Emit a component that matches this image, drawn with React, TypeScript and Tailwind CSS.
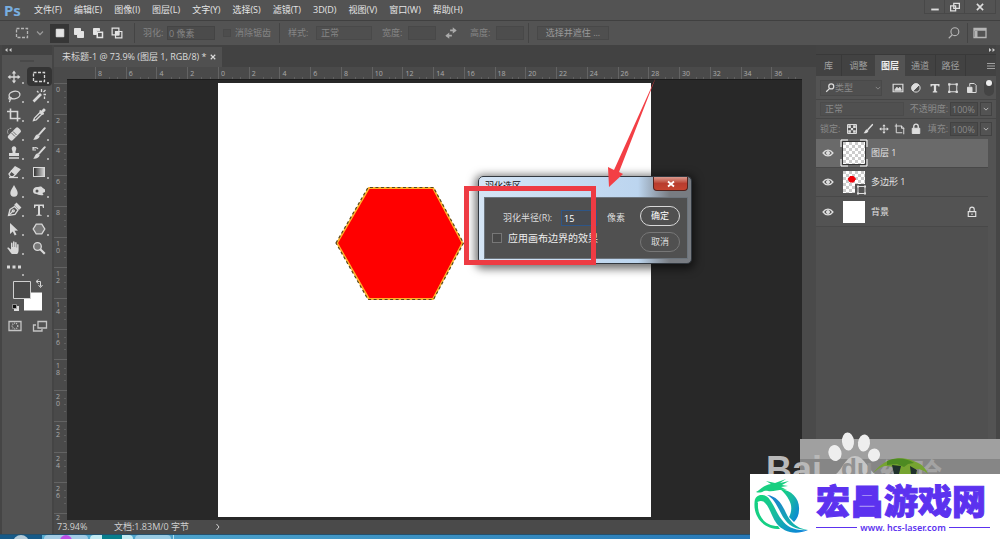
import type { ReactNode } from "react";

const menus = ["文件(F)", "编辑(E)", "图像(I)", "图层(L)", "文字(Y)", "选择(S)", "滤镜(T)", "3D(D)", "视图(V)", "窗口(W)", "帮助(H)"];

const rulerX = [8, 6, 4, 2, 0, 2, 4, 6, 8, 10, 12, 14, 16, 18, 20, 22, 24, 26, 28, 30, 32, 34, 36];
const rulerY = ["0", "2", "4", "6", "8", "10", "12", "14", "16", "18", "20", "22", "24", "26"];

function Icon({ children, className = "size-4" }: { children: ReactNode; className?: string }) {
  return (
    <svg viewBox="0 0 16 16" className={className} fill="none" stroke="currentColor" strokeWidth="1.3" aria-hidden="true">
      {children}
    </svg>
  );
}

const moveIcon = (
  <Icon>
    <path d="M8 3v10M3 8h10" />
    <path d="M8 1.600 10.200 4.400H5.800zM8 14.400 5.800 11.600h4.400zM1.600 8l2.800-2.200v4.400zM14.400 8l-2.800 2.200V5.800z" fill="currentColor" stroke="none" />
  </Icon>
);

const brushPath = (
  <>
    <path d="M13.800 2.200 8 8.600" strokeWidth="2" strokeLinecap="round" />
    <path d="M6.500 8.300 8.700 10.300C8 13 5 14 2 13.600 4 12.600 3.800 9 6.500 8.300z" fill="currentColor" stroke="none" />
  </>
);

const tools: { name: string; icon: ReactNode; corner?: boolean }[] = [
  { name: "移动", icon: moveIcon },
  { name: "矩形选框", icon: <Icon><rect x="2.500" y="3.500" width="11" height="9" strokeDasharray="3 1.500" /></Icon> },
  {
    name: "套索",
    icon: (
      <Icon>
        <ellipse cx="8.500" cy="7" rx="5.500" ry="3.800" transform="rotate(-12 8.500 7)" />
        <path d="M4 9c-1.500.5-1.500 2.300 0 2.300s1.500-1.800.3-2.200M4 11.300c.4 1.200 0 2-.8 2.700" />
      </Icon>
    ),
  },
  {
    name: "魔棒",
    icon: (
      <Icon>
        <path d="m2.500 13.500 7.500-7.500" strokeWidth="2.600" />
        <path d="M10.500 1v3M13.500 8.500V11M6 3l1.500 1.500M14.500 2l-2 2M12.500 6.500H15" />
      </Icon>
    ),
  },
  { name: "裁剪", icon: <Icon><path d="M4.500 1.500v10h10M1 4.500h10.500v10" strokeWidth="1.600" /></Icon> },
  {
    name: "吸管",
    icon: (
      <Icon>
        <path d="m9 4.500 3 3M2.500 13.500l1-2.500 5.500-5.500 1.800 1.800-5.600 5.500z" />
        <path d="m8 4 1.500-1 1 .8 1.600-2c1.500-.8 3 .7 2.200 2.200l-2 1.600.8 1-1 1.500z" fill="currentColor" stroke="none" />
      </Icon>
    ),
  },
  {
    name: "修复画笔",
    icon: (
      <Icon>
        <rect x="1" y="5" width="14.500" height="6.500" rx="2" transform="rotate(-45 8 8)" fill="currentColor" stroke="none" />
        <path d="m5.500 7 3.500 3.500M7 5.500l3.500 3.500" stroke="#535353" strokeWidth=".8" />
        <path d="M2 7.500c-1.500-3 1-6 4-5" strokeDasharray="1 1" strokeWidth="1" />
      </Icon>
    ),
  },
  { name: "画笔", icon: <Icon>{brushPath}</Icon> },
  {
    name: "仿制图章",
    icon: (
      <Icon>
        <path d="M5.800 4.200a2.300 2.300 0 1 1 4.400 0C10 5.500 9.200 6 9.500 8H13v3H3V8h3.500c.3-2-.5-2.500-.7-3.800zM3 12.300h10v1.500H3z" fill="currentColor" stroke="none" />
      </Icon>
    ),
  },
  {
    name: "历史记录画笔",
    icon: (
      <Icon>
        {brushPath}
        <path d="M2 3.500c2-1.500 4-1 5 .5M2 2v3h3" strokeWidth="1.100" />
      </Icon>
    ),
  },
  {
    name: "橡皮擦",
    icon: (
      <Icon>
        <path d="m3 10 2.500-3 4 3.300-2.300 2.400H4.500z" />
        <path d="m5.500 7 3.600-4.200 4.700 2.700-4.300 4.800z" fill="currentColor" />
        <path d="M3 13.500h9" />
      </Icon>
    ),
  },
  {
    name: "渐变",
    icon: (
      <Icon>
        <defs>
          <linearGradient id="toolGradient"><stop stopColor="#2b2b2b" /><stop offset="1" stopColor="#d8d8d8" /></linearGradient>
        </defs>
        <rect x="2.500" y="3.500" width="11" height="9" fill="url(#toolGradient)" strokeWidth="1" />
      </Icon>
    ),
  },
  { name: "模糊", icon: <Icon><path d="M8 2c1.200 3 3.700 5 3.700 8a3.700 3.700 0 0 1-7.400 0C4.300 7 6.800 5 8 2z" fill="currentColor" stroke="none" /></Icon> },
  {
    name: "减淡",
    icon: (
      <Icon>
        <path d="M2 8c0-3 2.500-4.500 5-4 2-1 4-.5 4.500.8L14 6.500V9l-2.500 1 1 2c-4 1-6-1-7-1C3.300 11 2 9.800 2 8z" fill="currentColor" stroke="none" />
        <circle cx="6" cy="8" r="1.500" fill="#535353" stroke="none" />
      </Icon>
    ),
  },
  {
    name: "钢笔",
    icon: (
      <Icon>
        <path d="M2.500 13.500 4 7.500l4.500-3 3.500 3.500-3 4.300z" />
        <path d="m9 3 1.500-1.500 4 4L13 7z" fill="currentColor" />
        <path d="m2.500 13.500 4-4" /><circle cx="7.300" cy="8.800" r="1" />
      </Icon>
    ),
  },
  { name: "横排文字", icon: <Icon><path d="M3 2.500h10V6h-1l-.7-2H9v8.500l1.700.4v.9H5.300v-.9l1.700-.4V4H4.700L4 6H3z" fill="currentColor" stroke="none" /></Icon> },
  { name: "路径选择", icon: <Icon><path d="m4 2 8 7.500-3.500.3 2 3.800-1.800.9-1.900-4L4 13z" fill="currentColor" stroke="none" /></Icon> },
  { name: "多边形", icon: <Icon><path d="M5.200 3.200h5.600L13.800 8l-3 4.800H5.200L2.200 8z" fill="#777" /></Icon> },
  {
    name: "抓手",
    icon: (
      <Icon>
        <path d="M5.800 14C4 12 3 10 1.600 8.700c-.7-1 .7-1.500 1.500-.8L5 9.500V3.400c0-1.200 1.500-1.200 1.500 0V7h.5V2.200c0-1.200 1.600-1.200 1.600 0V7h.5V3c0-1.200 1.500-1.200 1.500 0v4.500h.5V5c0-1.200 1.500-1.200 1.500 0v5c0 2-.6 3-1.400 4z" fill="currentColor" stroke="none" />
      </Icon>
    ),
  },
  { name: "缩放", icon: <Icon><circle cx="6.500" cy="6.500" r="3.800" fill="#777" /><path d="m9.300 9.300 4.500 4.500" strokeWidth="2.200" /></Icon>, corner: false },
];

function Chevron({ className = "size-2" }: { className?: string }) {
  return <Icon className={className}><path d="m2 5 6 6 6-6" strokeWidth="2.500" /></Icon>;
}

function Divider() {
  return <div className="h-5 w-px shrink-0 bg-[#444]" />;
}

function OptionsBar() {
  return (
    <div className="flex h-[25px] shrink-0 items-center border-t border-[#404040] bg-[#535353] text-[#858585]">
      <button aria-label="矩形选框工具" className="ml-3.5 flex w-8 items-center gap-1.5 text-[#b5b5b5]">
        <Icon><rect x="2.500" y="3.500" width="11" height="9" strokeDasharray="3 1.500" /></Icon>
        <Chevron className="size-2 text-[#999]" />
      </button>
      <div className="ml-1 flex items-center text-[#e4e4e4]">
        <button aria-label="新选区" className="flex size-[19px] items-center justify-center bg-[#363636]">
          <Icon className="size-3"><path d="M3 3h10v10H3z" fill="currentColor" /></Icon>
        </button>
        <button aria-label="添加到选区" className="flex size-[19px] items-center justify-center">
          <Icon className="size-3"><path d="M2 2h8v4h4v8H6v-4H2z" fill="currentColor" /></Icon>
        </button>
        <button aria-label="从选区减去" className="flex size-[19px] items-center justify-center">
          <Icon className="size-3"><path d="M2 2h8v3H6v5H2z" fill="currentColor" /><path d="M7 7h7v7H7z" strokeWidth="2" /></Icon>
        </button>
        <button aria-label="与选区交叉" className="flex size-[19px] items-center justify-center">
          <Icon className="size-3"><path d="M1.500 1.500h9v9h-9zM6 6h8.500v8.500H6z" strokeWidth="1.600" /><path d="M6 6h4.500v4.500H6z" fill="currentColor" /></Icon>
        </button>
      </div>
      <div className="mr-2 ml-2"><Divider /></div>
      <label className="flex items-center gap-1">
        <span className="w-5">羽化:</span>
        <input defaultValue="0 像素" disabled className="h-3.5 w-12 border border-[#444] bg-[#4b4b4b] px-px" />
      </label>
      <label className="ml-2 flex items-center gap-1">
        <input type="checkbox" disabled className="size-2 appearance-none border border-[#494949] bg-[#4d4d4d]" />
        <span>消除锯齿</span>
      </label>
      <div className="mr-2 ml-2"><Divider /></div>
      <label className="flex items-center gap-1">
        <span className="w-6">样式:</span>
        <select disabled className="h-3.5 w-14 appearance-none border border-[#494949] bg-[#4f4f4f] px-1 opacity-100"><option>正常</option></select>
      </label>
      <label className="ml-2.5 flex items-center gap-1">
        <span className="w-[22px]">宽度:</span>
        <input disabled className="h-3.5 w-7 border border-[#484848] bg-[#4d4d4d]" />
      </label>
      <button aria-label="互换宽高" className="mx-2 text-[#aaa]">
        <Icon className="size-3.5"><path d="M7 5h6M3 11h6" strokeWidth="1.800" /><path d="m10 1.500 4.500 3.500L10 8.500zM6 7.500 1.500 11 6 14.500z" fill="currentColor" stroke="none" /></Icon>
      </button>
      <label className="ml-1 flex items-center gap-1">
        <span className="w-[22px]">高度:</span>
        <input disabled className="h-3.5 w-7 border border-[#484848] bg-[#4d4d4d]" />
      </label>
      <div className="mr-2 ml-1"><Divider /></div>
      <button className="h-3.5 w-[72px] border border-[#484848] bg-[#4f4f4f] leading-3 text-[#999]">选择并遮住 ...</button>
      <div className="mr-3 ml-auto flex items-center gap-1 text-[#b5b5b5]">
        <button aria-label="搜索" className="mr-0.5"><Icon className="size-3.5"><circle cx="9" cy="6.500" r="4.500" /><path d="m6 10-4 4" /></Icon></button>
        <Divider />
        <button aria-label="工作区">
          <Icon><path d="M2 3.500h12v9H2zM2 5h12" /><path d="M3 6h2.500v6H3z" fill="currentColor" stroke="none" /></Icon>
        </button>
      </div>
    </div>
  );
}

function ToolBox() {
  return (
    <aside className="flex w-[54px] shrink-0 flex-col border-x-2 border-[#454545] bg-[#535353] text-[#d8d8d8]">
      <div className="flex h-2.5 items-center bg-[#424242] pl-0.5 text-[#ccc]">
        <Icon className="size-2"><path d="M7 4 2 8l5 4zM15 4l-5 4 5 4z" fill="currentColor" stroke="none" /></Icon>
      </div>
      <div className="flex h-3 items-center justify-center"><div className="h-0.5 w-3.5 bg-[#494949]" /></div>
      <div className="grid auto-rows-[19px] grid-cols-2">
        {tools.map((tool, i) => (
          <button
            key={tool.name}
            aria-label={tool.name}
            className={i === 1 ? "flex items-end justify-center rounded-sm bg-[#343434]" : "flex items-end justify-center"}
          >
            <span className="self-center">{tool.icon}</span>
            <span className={tool.corner === false ? "w-0.5" : "mb-0.5 h-0.5 w-0.5 bg-[#aaa]"} />
          </button>
        ))}
        <button aria-label="编辑工具栏" className="flex items-end justify-center">
          <span className="self-center"><Icon><path d="M1 8h3M6.500 8h3M12 8h3" strokeWidth="3" /></Icon></span>
          <span className="h-0.5 w-0.5 bg-[#aaa]" />
        </button>
      </div>
      <button aria-label="前景色和背景色" className="mt-0.5 ml-2 w-[34px]">
        <svg viewBox="0 0 34 34" className="w-full" aria-hidden="true">
          <path d="M14 14.500h18v18H14z" fill="#fff" />
          <path d="M3.500 3.500h17v17h-17z" fill="#4a4a4a" stroke="#cfcfcf" />
          <path d="M26.500 3.500h4v5M28.500 1.500l-2.500 2 2.500 2M28.500 7l2 2.500 2-2.500" fill="none" stroke="#d8d8d8" />
          <path d="M4 28h5v5H4z" fill="#ddd" /><path d="M2.500 26.500h4v4h-4z" fill="#111" stroke="#aaa" strokeWidth=".8" />
        </svg>
      </button>
      <div className="mt-1.5 flex justify-around text-[#c4c4c4]">
        <button aria-label="快速蒙版"><Icon><path d="M2 3.500h12v9H2z" /><circle cx="8" cy="8" r="2.800" strokeDasharray="1 1" /></Icon></button>
        <button aria-label="屏幕模式"><Icon><path d="M6 3.500h8.500v6.500H6zM4 7H1.500v6H10v-2" /></Icon></button>
      </div>
    </aside>
  );
}

function Workspace() {
  return (
    <section className="flex min-w-0 flex-1 flex-col bg-[#424242]">
      <div className="flex h-[22px] shrink-0 items-end">
        <div className="flex h-5 items-center gap-1 bg-[#505050] pr-1.5 pl-2 text-[#dcdcdc]">
          <span>未标题-1 @ 73.9% (图层 1, RGB/8) *</span>
          <button aria-label="关闭文档"><Icon className="size-1.5"><path d="m2 2 12 12M14 2 2 14" strokeWidth="3" /></Icon></button>
        </div>
      </div>
      <div className="flex min-h-0 flex-1">
        <div className="flex w-[13px] shrink-0 flex-col bg-[#4a4a4a] pt-4 text-[7px] leading-[7px] text-[#aaa]">
          <div className="grid min-h-0 flex-1 auto-rows-fr">
            {rulerY.map((n, i) => (
              <div key={i} className="flex border-t border-[#636363] pt-0.5 pl-0.5">
                <div className="flex flex-col">
                  {n.split("").map((d, j) => <span key={j}>{d}</span>)}
                </div>
                <div className="mr-px mb-1 ml-auto flex w-0.5 flex-col justify-evenly">
                  <i className="h-px bg-[#606060]" /><i className="h-px bg-[#606060]" /><i className="h-px bg-[#606060]" />
                </div>
              </div>
            ))}
          </div>
          <div className="h-[7px] overflow-hidden border-t border-[#636363] pl-0.5">2</div>
        </div>
        <div className="flex min-w-0 flex-1 flex-col">
          <div className="grid h-3 shrink-0 auto-cols-fr grid-flow-col bg-[#4a4a4a] pl-7 text-[7px] leading-[11px] text-[#aaa]">
            {rulerX.map((n, i) => (
              <div key={i} className="flex items-end border-l border-[#636363] pl-0.5">
                <span>{n}</span>
                <div className="flex h-0.5 flex-1 justify-evenly">
                  <i className="w-px bg-[#606060]" /><i className="w-px bg-[#606060]" />
                </div>
              </div>
            ))}
          </div>
          <div className="min-h-0 flex-1 border-t border-[#1c1c1c] bg-[#282828] px-[151px] pt-[3px] pb-[3px]">
            <div className="h-full bg-white">
              <svg viewBox="0 0 433 434" className="size-full" aria-hidden="true">
                <path d="M119 160 151 105h64l29.500 55-29.500 56h-64z" fill="#ff0000" stroke="#ffb22e" strokeWidth="1.800" />
                <path d="M118 160 150 104.500h65.500l30 55.500-30 56.500H150z" fill="none" stroke="#57451a" strokeWidth="1.200" strokeDasharray="3 2.500" />
              </svg>
            </div>
          </div>
        </div>
        <div className="w-[14px] shrink-0 bg-[#4a4a4a]" />
      </div>
      <footer className="flex h-3.5 shrink-0 items-center bg-[#4a4a4a] text-[#d0d0d0]">
        <span className="w-9 pl-[3px]">73.94%</span>
        <span className="ml-6 w-[90px]">文档:1.83M/0 字节</span>
        <Icon className="ml-2.5 size-2"><path d="m5 2 5 6-5 6" strokeWidth="2" /></Icon>
      </footer>
    </section>
  );
}

function Eye() {
  return (
    <button aria-label="图层可见性" className="ml-1.5 text-[#ddd]">
      <Icon className="size-3"><path d="M1.500 8c3.500-5 9.500-5 13 0-3.500 5-9.500 5-13 0z" strokeWidth="1.800" /><circle cx="8" cy="8" r="2" fill="currentColor" /></Icon>
    </button>
  );
}

function LayerRow({ name, kind }: { name: string; kind: "empty" | "shape" | "background" }) {
  return (
    <li className={kind === "empty" ? "flex h-[29px] items-center bg-[#6a6a6a]" : "flex h-[29px] items-center"}>
      <Eye />
      <svg viewBox="0 0 28 28" className="ml-1.5 size-7" aria-hidden="true">
        <defs>
          <pattern id={"checker-" + kind} width="6" height="6" patternUnits="userSpaceOnUse">
            <path d="M0 0h6v6H0z" fill="#fff" /><path d="M0 0h3v3H0zM3 3h3v3H3z" fill="#ccc" />
          </pattern>
        </defs>
        <path d="M3 3h22v22H3z" fill={kind === "background" ? "#fff" : "url(#checker-" + kind + ")"} />
        {kind === "empty" && (
          <>
            <path d="M2.500 2.500h23v23h-23z" fill="none" stroke="#333" />
            <path d="M1 8V1h7M20 1h7v7M27 20v7h-7M8 27H1v-7" fill="none" stroke="#fff" />
          </>
        )}
        {kind === "shape" && (
          <>
            <path d="M10 8.500h3.500l2 2.500-2 3H10l-2-3z" fill="#f00008" stroke="#f00008" />
            <path d="M15 16h12v12H15z" fill="#535353" />
            <path d="M18 18.500h7v7h-7z" fill="none" stroke="#ddd" />
            <path d="M17 17.500h2v2h-2zM24 17.500h2v2h-2zM17 24.500h2v2h-2zM24 24.500h2v2h-2z" fill="#ddd" />
          </>
        )}
      </svg>
      <span className="ml-[3px]">{name}</span>
      {kind === "background" && (
        <Icon className="mr-2.5 ml-auto size-3"><path d="M3 7.500h10V14H3zM5 7V4.500a3 3 0 0 1 6 0V7M8 10v2" strokeWidth="1.500" /></Icon>
      )}
    </li>
  );
}

function LayersPanel() {
  return (
    <aside className="flex w-[184px] shrink-0 flex-col border-r-4 border-[#464646] bg-[#535353] text-[#8a8a8a]">
      <div className="flex h-2.5 shrink-0 items-center justify-end border-b border-[#393939] bg-[#434343] text-[#ccc]">
        <Icon className="size-2"><path d="m2 4 5 4-5 4zM9 4l5 4-5 4z" fill="currentColor" stroke="none" /></Icon>
      </div>
      <div role="tablist" className="flex h-[21px] shrink-0 bg-[#424242] text-[#a0a0a0]">
        <button role="tab" className="w-[25px]">库</button>
        <button role="tab" className="w-[34px] border-l border-[#393939]">调整</button>
        <button role="tab" aria-selected="true" className="w-[30px] bg-[#535353] font-bold text-[#eee]">图层</button>
        <button role="tab" className="w-[31px] border-r border-[#393939]">通道</button>
        <button role="tab" className="w-[30px] border-r border-[#393939]">路径</button>
        <button aria-label="面板菜单" className="ml-auto"><Icon className="mr-px size-2"><path d="M0 3h16M0 8h16M0 13h16" strokeWidth="2" /></Icon></button>
      </div>
      <div className="flex h-6 shrink-0 items-center border-b border-[#464646] pl-1">
        <label className="flex h-4 w-[62px] items-center border border-[#494949] bg-[#4f4f4f] pl-1">
          <Icon className="size-2.5 shrink-0 text-[#ddd]"><circle cx="10" cy="5.500" r="4" strokeWidth="2" /><path d="m7 9-5 5" strokeWidth="2" /></Icon>
          <select aria-label="图层类型" className="w-10 appearance-none"><option>类型</option></select>
          <Chevron className="size-1.5" />
        </label>
        <div className="ml-2.5 flex flex-1 items-center justify-between pr-0.5 text-[#ddd]">
          <Icon className="size-3"><path d="M1.500 3h13v10h-13z" strokeWidth="1.600" /><path d="m3.500 11 3-4 2 2 2-2 2 4z" fill="currentColor" /></Icon>
          <Icon className="size-3"><circle cx="8" cy="8" r="5.500" /><path d="M12 4a5.500 5.500 0 0 0-8 8z" fill="currentColor" /></Icon>
          <Icon className="size-3"><path d="M2 2.500h12V6h-1.500L12 4.500H9.500V12l1.500.5V14H5v-1.500l1.500-.5V4.500H4L3.500 6H2z" fill="currentColor" stroke="none" /></Icon>
          <Icon className="size-3"><path d="M3 3h10v10H3z" /><path d="M1.500 1.500h3v3h-3zM11.500 1.500h3v3h-3zM1.500 11.500h3v3h-3zM11.500 11.500h3v3h-3z" fill="currentColor" stroke="none" /></Icon>
          <Icon className="size-3"><path d="M5 6V2h6l2.500 2.500V14H8" /><path d="M2 7h6v7H2z" fill="currentColor" /></Icon>
          <span className="flex h-4 w-2.5 justify-center rounded-full bg-[#444]"><span className="size-1.5 rounded-full bg-[#eee]" /></span>
        </div>
      </div>
      <div className="flex h-[19px] shrink-0 items-center justify-between border-b border-[#464646] pr-1 pl-1">
        <select aria-label="混合模式" className="h-3.5 w-[84px] appearance-none border border-[#4b4b4b] bg-[#505050] px-1"><option>正常</option></select>
        <label className="flex items-center gap-0.5">不透明度:
          <input defaultValue="100%" className="h-3.5 w-7 border border-[#424242] bg-[#4b4b4b] px-px" />
          <span className="flex h-3.5 w-3 items-center justify-center border border-[#424242] text-[#bbb]"><Chevron className="size-1.5" /></span>
        </label>
      </div>
      <div className="flex h-5 shrink-0 items-center justify-between pr-1 pl-1">
        <span>锁定:</span>
        <div className="flex gap-1 text-[#ddd]">
          <Icon className="size-3"><path d="M2 2h12v12H2z" /><path d="M3 3h3.500v3.500H3zM9.500 3H13v3.500H9.500zM6.500 6.500h3v3h-3zM3 9.500h3.500V13H3zM9.500 9.500H13V13H9.500z" fill="currentColor" stroke="none" /></Icon>
          <Icon className="size-3">{brushPath}</Icon>
          <span className="[&>svg]:size-3">{moveIcon}</span>
          <Icon className="size-3"><path d="M3 1v12h8M1 4h9l3 3v8" /><path d="M10 3.500V7h3.500" /></Icon>
          <Icon className="size-3"><path d="M3 7h10v7H3z" fill="currentColor" /><path d="M5 7V4.500a3 3 0 0 1 6 0V7" strokeWidth="1.800" /></Icon>
        </div>
        <label className="flex items-center gap-0.5">填充:
          <input defaultValue="100%" className="h-3.5 w-7 border border-[#424242] bg-[#4b4b4b] px-px" />
          <span className="flex h-3.5 w-3 items-center justify-center border border-[#424242] text-[#bbb]"><Chevron className="size-1.5" /></span>
        </label>
      </div>
      <ul className="mr-2 divide-y divide-[#484848] border-b border-[#484848] text-[#e2e2e2]">
        <LayerRow name="图层 1" kind="empty" />
        <LayerRow name="多边形 1" kind="shape" />
        <LayerRow name="背景" kind="background" />
      </ul>
      <div className="mr-2 flex-1 bg-[#505050]" />
    </aside>
  );
}

function FeatherDialog() {
  return (
    <div
      role="dialog"
      aria-label="羽化选区"
      className="absolute top-[176px] left-[478px] w-[214px] rounded-[5px] border border-[#32383f] bg-linear-to-r from-[#d5e5f5] from-0% via-[#bcd5ef] via-75% to-[#787c82] to-90% pr-[3px] pb-1 pl-[5px] shadow-[0_2px_9px_3px_rgba(0,0,0,0.55)]"
    >
      <div className="flex h-5 items-start justify-between text-[#111]">
        <span className="pt-[3px] pl-px leading-3">羽化选区</span>
        <button aria-label="关闭" className="flex h-3.5 w-[35px] items-center justify-center rounded-b-sm border border-t-0 border-[#54231e] bg-linear-to-b from-[#d99a8f] via-[#b83c2e] to-[#c5432f] text-white">
          <Icon className="size-2"><path d="m2 3 12 10M14 3 2 13" strokeWidth="3.500" /></Icon>
        </button>
      </div>
      <form className="flex h-[62px] justify-between border border-[#6c747c] bg-[#505050] pt-2 pr-[7px] pl-[7px] text-[10px] text-[#dedede]">
        <div className="flex flex-col gap-1 pt-1">
          <div className="flex h-4 items-center">
            <label className="flex items-center gap-1 pl-[11px] text-[9px]">
              <span className="w-[54px]">羽化半径(R):</span>
              <input defaultValue="15" className="h-4 w-9 border border-[#2d5587] bg-[#474b51] px-0.5 text-white" />
            </label>
            <span className="ml-2.5 text-[9px]">像素</span>
          </div>
          <label className="flex h-4 items-center gap-1.5 text-[#eee]">
            <input type="checkbox" className="size-[10px] appearance-none border border-[#777] bg-[#484848]" />
            <span>应用画布边界的效果</span>
          </label>
        </div>
        <div className="flex flex-col gap-1.5 text-[9px]">
          <button type="button" className="h-5 w-10 rounded-full border border-[#d8d8d8] leading-4 text-white">确定</button>
          <button type="button" className="h-5 w-10 rounded-full border border-[#777] leading-4">取消</button>
        </div>
      </form>
    </div>
  );
}

function Annotation() {
  return (
    <>
      <div className="pointer-events-none absolute top-[186px] left-[464px] h-[79px] w-[132px] border-[5px] border-[#ee3b43]" />
      <svg viewBox="0 0 50 112" className="pointer-events-none absolute top-[76px] left-[607px] h-28 w-[50px]" aria-hidden="true">
        <path d="M49 1 7 94l-6-3 1 20 14-13-4-2z" fill="#f33f45" />
      </svg>
    </>
  );
}

function Watermark() {
  return (
    <div className="absolute right-0 bottom-0 w-[250px]">
      <div className="relative h-[54px] overflow-hidden">
        <div className="ml-[50px] h-full pt-[19px]">
          <div className="h-5 bg-[#a0a0a0]" />
          <div className="h-[15px] bg-[#868686]" />
        </div>
        <svg viewBox="0 0 250 54" className="absolute inset-0 size-full" aria-hidden="true">
          <g fill="#eee">
            <ellipse cx="98" cy="21.500" rx="6" ry="9" transform="rotate(-5 98 21.500)" />
            <ellipse cx="114" cy="23" rx="6" ry="8.500" transform="rotate(7 114 23)" />
            <ellipse cx="85" cy="33" rx="6.500" ry="8" transform="rotate(-15 85 33)" />
            <ellipse cx="124" cy="35" rx="6" ry="6.500" transform="rotate(25 124 35)" />
          </g>
          <path d="M86 54c6-4 10-18 19-18s13 13 20 18z" fill="#c6c6c6" />
        </svg>
        <span className="absolute top-[32px] left-4 font-['Liberation_Sans'] text-[36px] leading-9 font-bold text-[#b9b9b9]">Bai</span>
        <span className="absolute top-[36px] left-[91px] font-['Liberation_Sans'] text-[26px] leading-6 font-bold text-[#929292]">du</span>
        <span className="absolute top-[36px] left-[130px] text-[31px] leading-9 font-bold text-[#a3a3a3]">经验</span>
        <svg viewBox="0 0 60 18" className="absolute right-[70px] bottom-0 h-[18px] w-[60px]" aria-hidden="true">
          <path d="M3 17C9 10 14 6 20 4c8-3 19-2 26 2 6 2 10 7 12 12-3-3-7-5-12-5l1 5H26l-3-7c-3-1-5-1-8-1-5 1-8 4-12 7z" fill="#76a431" />
          <path d="M17 5c9-4 20-3 27 2l-6 1-4 3-7-3-10 1z" fill="#4d8a22" />
          <path d="m22 9 9 1-2 8h-5zM40 10l7 4-1 4h-5z" fill="#20312c" />
        </svg>
      </div>
      <div className="flex h-[65px] items-center bg-white">
        <svg viewBox="0 0 62 65" className="h-[65px] w-[62px] shrink-0" aria-label="宏昌游戏网">
          <defs>
            <linearGradient id="logoGradient" x1="0" y1="0" x2="1" y2=".8">
              <stop stopColor="#13d879" /><stop offset=".5" stopColor="#18b9a2" /><stop offset="1" stopColor="#0b86d8" />
            </linearGradient>
            <linearGradient id="ribbonGradient" x1="0" y1="0" x2="0" y2="1">
              <stop stopColor="#1b7fd0" /><stop offset="1" stopColor="#12b8a8" />
            </linearGradient>
          </defs>
          <path d="M6 18c5-3 8-7 15-8l-5-3 9 2 11-4-6 4 9-2-7 4 6 1-7 1 6 3c-9-1-13 2-19 1-5-1-7 3-12 1z" fill="#19cf80" />
          <path d="M30 15c12 1 20 10 19 21 0 5-2 9-5 12l-5-5c3-6 3-12 0-17-2-4-5-8-9-11z" fill="url(#logoGradient)" />
          <path d="M5 25c-3 15 6 30 25 30l-2-3C15 52 7 42 8 29z" fill="#16cf84" />
          <path d="M17 21c10 1 15 9 19 18 4 8 9 15 22 17-13 0-20-5-25-13-5-9-8-18-16-22z" fill="url(#ribbonGradient)" />
          <path d="M5 26c1-6 11-7 15 0 5 7 7 14 12 20 5 7 13 11 26 10-14 6-25 1-31-6-6-8-7-17-13-22-3-2-6-1-9 2z" fill="url(#logoGradient)" />
        </svg>
        <div className="flex flex-1 flex-col pr-2.5 pl-1 text-[#5c32ef]">
          <strong className="text-[34px] leading-[42px] font-black [-webkit-text-stroke:1px_#5c32ef]">宏昌游戏网</strong>
          <a href="#home" className="flex items-center gap-[3px] font-['Noto_Sans'] text-[9px] leading-3 font-semibold">
            <span className="h-px flex-1 bg-[#5c32ef]" />www. hcs-laser.com<span className="h-px flex-1 bg-[#5c32ef]" />
          </a>
        </div>
      </div>
    </div>
  );
}

function Taskbar() {
  return (
    <div className="flex h-[5px] shrink-0 gap-0.5 overflow-hidden border-t border-[#24506c] bg-linear-to-r from-[#59afd1] via-[#378cc0] to-[#1764ad]">
      <div className="flex w-[42px] justify-center bg-[#175a88]"><div className="size-4 rounded-full bg-[#b5cbd8]" /></div>
      <div className="flex w-11 justify-center rounded-t-sm bg-[#a4cce5]"><div className="size-3 rounded-full bg-[#bd4fe6]" /></div>
      <div className="flex w-[43px] justify-center rounded-t-sm bg-[#c2ebf3]"><div className="w-5 bg-[#087e8c]" /></div>
      <div className="w-9 rounded-t-sm bg-[#9acbe3]" />
      <div className="w-px bg-[#b5e2f0]" />
    </div>
  );
}

export default function App() {
  return (
    <div className="relative flex h-screen flex-col overflow-hidden bg-[#535353] font-['Open_Sans','Noto_Sans_CJK_SC',sans-serif] text-[9px] leading-3 whitespace-nowrap [&_select]:opacity-100">
      <header className="flex h-5 shrink-0 items-center bg-[#535353] text-[#e5e5e5]">
        <span className="w-[34px] pl-1 font-['Noto_Sans'] text-[15px] leading-5 font-bold text-[#78aee0]">Ps</span>
        <nav className="flex gap-3">
          {menus.map((m) => <button key={m}>{m}</button>)}
        </nav>
        <div className="mr-1 ml-auto flex h-3.5 items-center self-start border-b border-[#484848] text-[#ddd]">
          <button aria-label="最小化" className="flex h-full w-5 items-center justify-center border-l border-[#484848]"><Icon className="size-2.5"><path d="M2 12h12" strokeWidth="3" /></Icon></button>
          <button aria-label="还原" className="flex h-full w-5 items-center justify-center border-l border-[#484848]"><Icon className="size-2.5"><path d="M6 2h9v8H6zM1 6h8v8H1z" strokeWidth="2" /></Icon></button>
          <button aria-label="关闭" className="flex h-full w-8 items-center justify-center border-x border-[#484848]"><Icon className="size-2.5"><path d="m3 3 10 10M13 3 3 13" strokeWidth="2.500" /></Icon></button>
        </div>
      </header>
      <OptionsBar />
      <main className="flex min-h-0 flex-1">
        <ToolBox />
        <Workspace />
        <LayersPanel />
      </main>
      <Taskbar />
      <FeatherDialog />
      <Annotation />
      <Watermark />
    </div>
  );
}
